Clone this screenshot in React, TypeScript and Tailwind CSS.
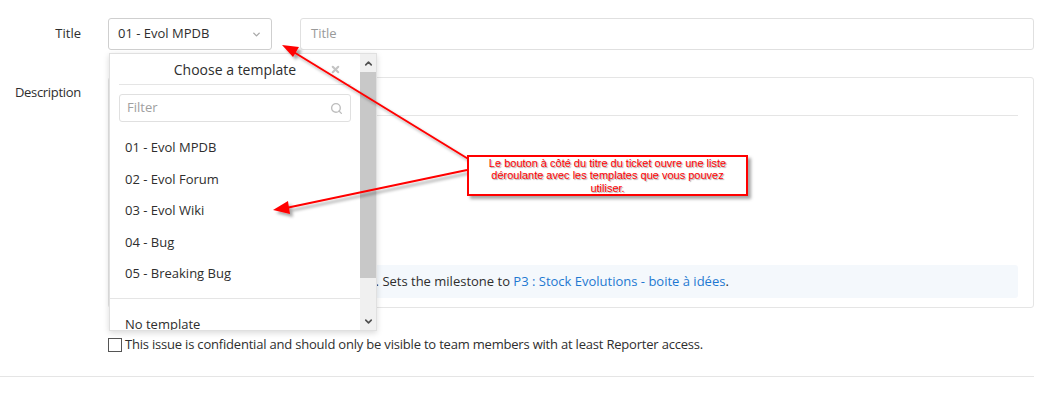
import { ChevronDown, ChevronUp, Search, X } from "lucide-react";

const templates = ["01 - Evol MPDB", "02 - Evol Forum", "03 - Evol Wiki", "04 - Bug", "05 - Breaking Bug"];

function TemplateDropdown() {
  return (
    <div className="absolute left-[109px] top-[53px] w-[268px] h-[278px] bg-white border border-[#e0e0e0] shadow-[0_2px_6px_rgba(0,0,0,0.15)] flex overflow-hidden">
      <div className="flex-1 flex flex-col">
        <div className="shrink-0 mx-[9px] h-[31px] border-b border-[#e5e5e5] flex items-center justify-center relative">
          <span className="text-[14px] text-[#2e2e2e]">Choose a template</span>
          <X className="absolute right-[10px] top-[10px] w-[11px] h-[11px] text-[#c4c4c4]" strokeWidth={4.5} />
        </div>
        <div className="shrink-0 mx-[9px] mt-[9px] h-[28px] border border-[#e0e0e0] rounded-[3px] flex items-center px-[7px]">
          <span className="flex-1 text-[13px] text-[#a0a0a0]">Filter</span>
          <Search className="w-[13px] h-[13px] text-[#bdbdbd]" strokeWidth={2.5} />
        </div>
        <ul className="shrink-0 mt-[10px]">
          {templates.map((t) => (
            <li key={t} className="h-[31.5px] flex items-center pl-[15px] text-[13px] text-[#2e2e2e]">
              {t}
            </li>
          ))}
        </ul>
        <div className="shrink-0 mt-[8px] border-t border-[#e5e5e5]" />
        <div className="shrink-0 pl-[15px] pt-[16px] text-[13px] text-[#2e2e2e]">No template</div>
      </div>
      <div className="w-[16px] bg-[#f0f0f0] flex flex-col items-center">
        <ChevronUp className="shrink-0 mt-[4px] w-[11px] h-[11px] text-[#505050]" strokeWidth={3.5} />
        <div className="shrink-0 mt-[3px] w-[16px] h-[206px] bg-[#c8c8c8]" />
        <div className="flex-1" />
        <ChevronDown className="shrink-0 mb-[3px] w-[11px] h-[11px] text-[#505050]" strokeWidth={3.5} />
      </div>
    </div>
  );
}

function Annotation() {
  return (
    <>
      <svg className="absolute inset-0 pointer-events-none" width="1050" height="395">
        <defs>
          <filter id="sh" x="-10%" y="-10%" width="130%" height="130%">
            <feDropShadow dx="3" dy="3" stdDeviation="1.5" floodColor="#000" floodOpacity="0.35" />
          </filter>
        </defs>
        <g filter="url(#sh)" stroke="#ff0000" strokeWidth="2" fill="#ff0000">
          <line x1="470" y1="160" x2="292" y2="51" />
          <polygon points="282,45 299,47 293,57" stroke="none" />
          <line x1="467" y1="170" x2="286" y2="208" />
          <polygon points="273,210 288,201 290,214" stroke="none" />
        </g>
      </svg>
      <div className="absolute left-[467px] top-[155px] w-[281px] h-[41px] border-2 border-[#ff0000] bg-white shadow-[3px_3px_3px_rgba(0,0,0,0.35)] flex flex-col items-center justify-center font-['Liberation_Sans',Arial,sans-serif] text-[11px] leading-[12.5px] text-[#ff0000] [text-shadow:1px_1px_1px_rgba(0,0,0,0.35)]">
        <span>Le bouton à côté du titre du ticket ouvre une liste</span>
        <span>déroulante avec les templates que vous pouvez</span>
        <span>utiliser.</span>
      </div>
    </>
  );
}

export default function App() {
  return (
    <div className="relative w-[1050px] h-[395px] bg-white overflow-hidden font-['Open_Sans','Noto_Sans',sans-serif] text-[#2e2e2e]">
      <div className="pt-[18px] pr-[16px]">
        <div className="flex items-center">
          <label className="w-[81px] text-right text-[13px]">Title</label>
          <div className="ml-[27px] w-[164px] h-[32px] border border-[#cfcfcf] rounded-[3px] flex items-center px-[9px]">
            <span className="flex-1 text-[13px]">01 - Evol MPDB</span>
            <ChevronDown className="w-[11px] h-[11px] text-[#a8a8a8]" strokeWidth={3} />
          </div>
          <div className="ml-[28px] flex-1 h-[32px] border border-[#e0e0e0] rounded-[3px] flex items-center px-[10px]">
            <span className="text-[13px] text-[#9a9a9a]">Title</span>
          </div>
        </div>

        <div className="flex mt-[27px]">
          <label className="w-[81px] text-right text-[13px] tracking-[-0.3px] pt-[6px]">Description</label>
          <div className="ml-[27px] flex-1 h-[231px] border border-[#e5e5e5] rounded-[3px] flex flex-col px-[15px] pb-[9px]">
            <div className="h-[38px] border-b border-[#e5e5e5]" />
            <div className="flex-1" />
            <div className="h-[33px] bg-[#f4f8fc] rounded-[3px] flex items-center text-[13px] pl-[10px]">
              <span className="inline-block w-[245px] text-right whitespace-nowrap overflow-hidden">Adds the label bug.</span>
              <span>&nbsp;Sets the milestone to&nbsp;</span>
              <span className="text-[#1f78d1]">P3 : Stock Evolutions - boite à idées</span>
              <span>.</span>
            </div>
          </div>
        </div>

        <div className="flex items-center mt-[27px] ml-[108px]">
          <span className="w-[14px] h-[14px] border border-[#555] bg-white" />
          <span className="ml-[3px] text-[13px] tracking-[-0.2px]">
            This issue is confidential and should only be visible to team members with at least Reporter access.
          </span>
        </div>

        <div className="mt-[21px] border-t border-[#e5e5e5]" />
      </div>

      <TemplateDropdown />
      <Annotation />
    </div>
  );
}
